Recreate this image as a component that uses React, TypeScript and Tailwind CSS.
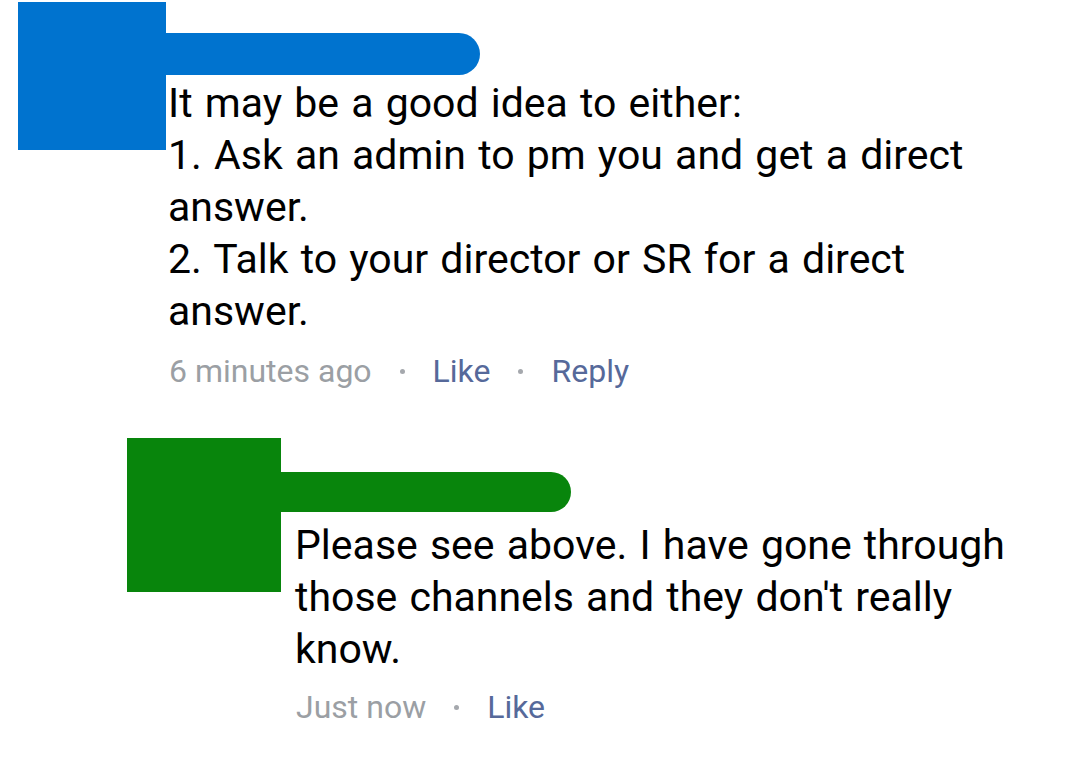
export default function App() {
  return (
    <div className="min-h-[758px] w-[1080px] bg-white pt-[2px] font-['Roboto',sans-serif] text-black">
      {/* first comment */}
      <div className="ml-[18px] flex">
        <div className="h-[148px] w-[148px] shrink-0 bg-[#0073cf]" />
        <div className="flex flex-col">
          <div className="mt-[31px] h-[42px] w-[314px] rounded-r-full bg-[#0073cf]" />
          <p className="ml-[2px] mt-[2px] whitespace-nowrap text-[41px] leading-[52px] [word-spacing:2px]">
            It may be a good idea to either:
            <br />
            1. Ask an admin to pm you and get a direct
            <br />
            answer.
            <br />
            2. Talk to your director or SR for a direct
            <br />
            answer.
          </p>
          <div className="ml-[3px] mt-[14px] flex items-center gap-[28px] text-[32px] leading-[40px]">
            <span className="text-[#9b9fa4]">6 minutes ago</span>
            <span className="h-[5px] w-[5px] rounded-full bg-[#a5a8ad]" />
            <span className="text-[#56699a]">Like</span>
            <span className="h-[5px] w-[5px] rounded-full bg-[#a5a8ad]" />
            <span className="text-[#56699a]">Reply</span>
          </div>
        </div>
      </div>

      {/* reply */}
      <div className="ml-[127px] mt-[47px] flex">
        <div className="h-[154px] w-[154px] shrink-0 bg-[#08850c]" />
        <div className="flex flex-col">
          <div className="mt-[34px] h-[40px] w-[290px] rounded-r-full bg-[#08850c]" />
          <p className="ml-[14px] mt-[7px] whitespace-nowrap text-[41px] leading-[52px] [word-spacing:2px]">
            Please see above. I have gone through
            <br />
            those channels and they don't really
            <br />
            know.
          </p>
          <div className="ml-[15px] mt-[12px] flex items-center gap-[28px] text-[32px] leading-[40px]">
            <span className="text-[#9b9fa4]">Just now</span>
            <span className="h-[5px] w-[5px] rounded-full bg-[#a5a8ad]" />
            <span className="text-[#56699a]">Like</span>
          </div>
        </div>
      </div>
    </div>
  );
}
